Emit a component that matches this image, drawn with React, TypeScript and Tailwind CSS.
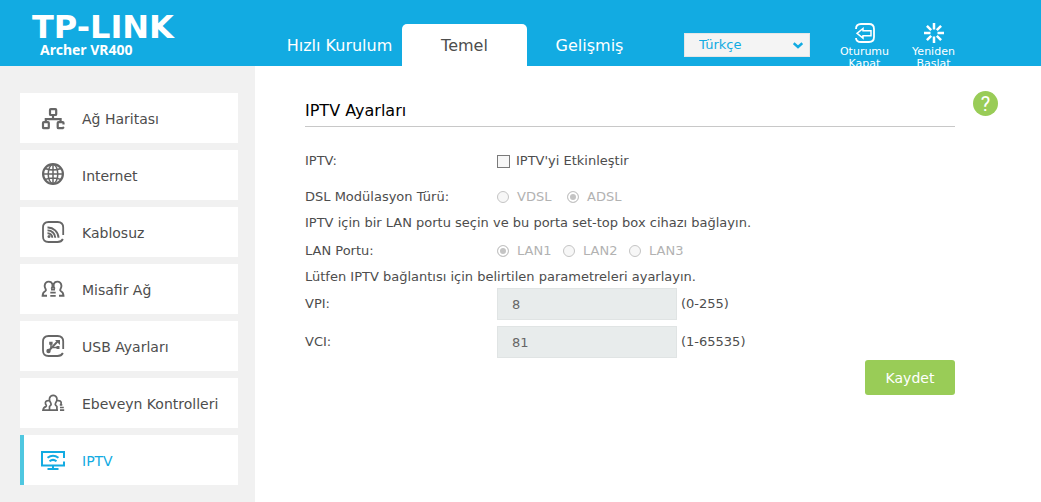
import type { ReactNode } from 'react';

function Glyph({ children }: { children: ReactNode }) {
  return (
    <svg viewBox="0 0 24 24" className="size-6 shrink-0" fill="none" stroke="currentColor" strokeWidth="2.200" aria-hidden="true">
      {children}
    </svg>
  );
}

const icons = {
  map: (
    <Glyph>
      <rect x="9" y="3.200" width="6.200" height="5.800" rx="0.8" />
      <path d="M12 9v4M4.800 16v-2.800h14.800v3" />
      <rect x="2" y="16.200" width="5.800" height="6" rx="0.8" />
      <path d="M22.500 18.500v-1.500q0-.8-.8-.8h-4.200q-.8 0-.8.800v4.400q0 .8.800.8h4.200l1.200-1.200" />
    </Glyph>
  ),
  globe: (
    <Glyph>
      <circle cx="12" cy="11" r="9.900" />
      <g strokeWidth="1.500">
        <ellipse cx="12" cy="11" rx="4.800" ry="9.500" />
        <path d="M12 1v20M2 11h20M4 5.500q8 3 16 0M4 16.500q8-3 16 0" />
      </g>
    </Glyph>
  ),
  wireless: (
    <Glyph>
      <path strokeWidth="1.800" d="M22.200 15V7.500Q22.200 2 16.700 2H7.500Q2 2 2 7.500v9Q2 22 7.500 22h9q4 0 5.400-3" />
      <circle cx="8" cy="16.500" r="1.500" fill="currentColor" stroke="none" />
      <path strokeWidth="1.900" d="M6.500 13.200a4.600 4.600 0 0 1 4.800 4.600M6.500 10.400a7.500 7.500 0 0 1 7.800 7.400M6.500 7.500a10.500 10.500 0 0 1 11 10.300" />
    </Glyph>
  ),
  guests: (
    <Glyph>
      <path strokeWidth="1.900" d="M6 18.800H1.600q.2-3.600 2.800-4.800 1-.7.200-2-1.200-1.800-.9-3.700Q4.300 4.600 7.700 4.600q2.900 0 3.700 2.700.6 2.400-1 4.500M18 18.800h4.500q-.2-3.600-2.800-4.800-1-.7-.2-2 1.200-1.800.9-3.700-.6-3.700-4-3.700-2.900 0-3.700 2.700-.6 2.400 1 4.500" />
      <path strokeWidth="1.700" d="M10 12.600h4M9.300 15.700h5.400M9.300 18.800h5.400" />
    </Glyph>
  ),
  usb: (
    <Glyph>
      <path strokeWidth="1.800" d="M22.200 15V7.500Q22.200 2 16.700 2H7.500Q2 2 2 7.500v9Q2 22 7.500 22h9q4 0 5.400-3" />
      <circle cx="7.500" cy="17" r="2.200" fill="currentColor" stroke="none" />
      <path strokeWidth="1.900" d="m7.500 17 9.500-10" />
      <path strokeWidth="1.500" d="M10 14V9.500M11.500 13.500h5" />
      <path d="M14 6h5v5zM8.200 7.800h3.400v3H8.200zM15.500 12h3v3h-3z" fill="currentColor" stroke="none" />
    </Glyph>
  ),
  parents: (
    <Glyph>
      <path strokeWidth="1.700" d="M8.500 19.200V15.500l1.300-1.300q.7-.9 0-2.100Q8 9.500 8.500 7.300 9.300 4.400 12.200 4.400t3.700 2.900q.5 2.200-1.300 4.800-.7 1.200 0 2.100l1.300 1.300v3.700M8 9.600q-3.300-.4-3.600 2.100-.1 1.500.9 2.600.3.800-.4 1.300-2.500.7-2.900 3.600h15M16.600 9.600q3.300-.4 3.600 2.100.1 1-.6 2.100M18.800 13.800h2.500M19 16.500h3.800M19 19.200h4.200" />
    </Glyph>
  ),
  tv: (
    <Glyph>
      <path strokeWidth="2" d="M23 10V4H1v13.500h22v-4M12 18v3M6.500 21h11M6.500 9.700q5.500-4 11 0M8.500 13.300q3.500-2.800 7 0" />
    </Glyph>
  ),
};

const menu = [
  { label: 'Ağ Haritası', icon: icons.map },
  { label: 'Internet', icon: icons.globe },
  { label: 'Kablosuz', icon: icons.wireless },
  { label: 'Misafir Ağ', icon: icons.guests },
  { label: 'USB Ayarları', icon: icons.usb },
  { label: 'Ebeveyn Kontrolleri', icon: icons.parents },
  { label: 'IPTV', icon: icons.tv, active: true },
];

function Radio({ name, label, checked, className }: { name: string; label: string; checked?: boolean; className: string }) {
  return (
    <label className={`flex items-center gap-2 text-[#b2b2b2] ${className}`}>
      <input
        type="radio"
        name={name}
        defaultChecked={checked}
        disabled
        className="size-3 appearance-none rounded-full border border-[#c4c4c4] bg-[#f7f7f7] checked:bg-[#c4c4c4] checked:shadow-[inset_0_0_0_2px_#ffffff]"
      />
      {label}
    </label>
  );
}

function NumberRow({ id, label, value, range }: { id: string; label: string; value: string; range: string }) {
  return (
    <div className="flex items-center">
      <label htmlFor={id} className="w-48">{label}</label>
      <input
        id={id}
        defaultValue={value}
        disabled
        className="h-8 w-[180px] border border-[#e0e4e4] bg-[#e8ecec] px-3.5 text-[#666666]"
      />
      <span className="ml-1">{range}</span>
    </div>
  );
}

export default function App() {
  return (
    <div className="flex min-h-screen flex-col bg-white font-['Verdana','DejaVu_Sans',sans-serif] text-[13px] text-[#4d4d4d]">
      <header className="flex h-[66px] overflow-hidden bg-[#12abe2] text-white">
        <div className="flex w-[277px] shrink-0 flex-col pt-3 pl-8">
          <div className="font-['DejaVu_Sans',sans-serif] text-[32px] leading-[30px] font-bold">TP-LINK</div>
          <div className="pl-2 font-['Noto_Sans',sans-serif] text-sm leading-4 font-bold">Archer VR400</div>
        </div>
        <nav className="flex shrink-0 items-end text-base">
          <a href="#quick" className="flex h-[42px] w-[125px] items-center justify-center pt-0.5 whitespace-nowrap">Hızlı Kurulum</a>
          <a href="#basic" className="flex h-[42px] w-[125px] items-center justify-center rounded-t-[5px] bg-white pt-0.5 text-[#4d4d4d]">Temel</a>
          <a href="#advanced" className="flex h-[42px] w-[125px] items-center justify-center pt-0.5">Gelişmiş</a>
        </nav>
        <div className="mt-[33px] ml-8 grid h-6 w-[126px] shrink-0 items-center">
          <select
            aria-label="Dil"
            className="col-start-1 row-start-1 h-6 w-full appearance-none border border-[#e6e6e6] bg-[#f4f4f4] px-3.5 text-[13px] text-[#12abe2]"
          >
            <option>Türkçe</option>
          </select>
          <svg viewBox="0 0 10 7" className="pointer-events-none col-start-1 row-start-1 mr-[7px] h-[7px] w-2.5 justify-self-end" fill="none" stroke="#12abe2" strokeWidth="2.500" aria-hidden="true">
            <path d="m.7 1.200 4.300 3.800 4.300-3.800" />
          </svg>
        </div>
        <div className="ml-5 flex shrink-0 pt-[23px] text-center text-[11px] leading-3">
          <a href="#logout" className="flex w-[69px] flex-col items-center gap-[3px]">
            <svg viewBox="0 0 20 20" className="size-5 shrink-0" fill="none" stroke="currentColor" aria-hidden="true">
              <path strokeWidth="1.800" d="M1 6Q1 1 6 1h8q5 0 5 5v8q0 5-5 5H6q-5 0-5-4" />
              <path strokeWidth="1.500" d="M2 10.300 8 5.500v2.300h8v5H8v2.300z" />
            </svg>
            Oturumu Kapat
          </a>
          <a href="#restart" className="flex w-[69px] flex-col items-center gap-[3px]">
            <svg viewBox="0 0 20 20" className="size-5 shrink-0" fill="none" stroke="currentColor" strokeWidth="2.500" aria-hidden="true">
              <path d="M10 0v6.500M10 13.500V20M0 10h6.500M13.500 10H20M2.900 2.900l4.300 4.300M12.800 12.800l4.300 4.300M17.100 2.900l-4.300 4.300M7.200 12.800l-4.300 4.300" />
            </svg>
            Yeniden Başlat
          </a>
        </div>
      </header>

      <div className="flex flex-1">
        <aside className="w-[255px] shrink-0 bg-[#f1f1f1] pt-[27px] pr-[17px] pl-5">
          <ul className="flex flex-col gap-[7px] text-sm">
            {menu.map((item) => (
              <li key={item.label}>
                <a
                  href="#menu"
                  className={`flex h-[50px] items-center gap-[17px] border-l-4 bg-white pl-[17px] whitespace-nowrap ${item.active ? 'border-[#4fc7e0] text-[#12abe2]' : 'border-white text-[#4d4d4d]'}`}
                >
                  <span className={item.active ? 'text-[#12abe2]' : 'text-[#666666]'}>{item.icon}</span>
                  <span className="pt-0.5">{item.label}</span>
                </a>
              </li>
            ))}
          </ul>
        </aside>

        <main className="flex flex-1 items-start gap-[18px] pt-[25px] pr-[43px] pl-[50px]">
          <form className="flex flex-1 flex-col">
            <h1 className="border-b border-[#c8c8c8] pt-2 pb-[3px] text-base leading-6 text-black">IPTV Ayarları</h1>
            <div className="mt-4 flex h-9 items-center">
              <span className="w-48">IPTV:</span>
              <label className="flex items-center gap-1.5">
                <input type="checkbox" className="size-[13px] appearance-none border border-[#7a7a7a] bg-[#f7f7f7]" />
                IPTV'yi Etkinleştir
              </label>
            </div>
            <div className="flex h-9 items-center" role="radiogroup" aria-label="DSL Modülasyon Türü">
              <span className="w-48">DSL Modülasyon Türü:</span>
              <Radio name="dsl" label="VDSL" className="w-[70px]" />
              <Radio name="dsl" label="ADSL" checked className="w-[70px]" />
            </div>
            <p className="pb-0.5 leading-4">IPTV için bir LAN portu seçin ve bu porta set-top box cihazı bağlayın.</p>
            <div className="flex h-9 items-center" role="radiogroup" aria-label="LAN Portu">
              <span className="w-48">LAN Portu:</span>
              <Radio name="lan" label="LAN1" checked className="w-[66px]" />
              <Radio name="lan" label="LAN2" className="w-[66px]" />
              <Radio name="lan" label="LAN3" className="w-[66px]" />
            </div>
            <p className="pb-0.5 leading-4">Lütfen IPTV bağlantısı için belirtilen parametreleri ayarlayın.</p>
            <div className="mt-px flex flex-col gap-1.5">
              <NumberRow id="vpi" label="VPI:" value="8" range="(0-255)" />
              <NumberRow id="vci" label="VCI:" value="81" range="(1-65535)" />
            </div>
            <button type="button" className="mt-0.5 h-[35px] w-[90px] self-end rounded-[3px] bg-[#99cc57] text-sm text-white">Kaydet</button>
          </form>
          <button type="button" aria-label="Yardım" className="flex size-[25px] shrink-0 items-center justify-center rounded-full bg-[#99cc57] font-['Roboto',sans-serif] text-xl leading-none text-white">
            ?
          </button>
        </main>
      </div>
    </div>
  );
}
